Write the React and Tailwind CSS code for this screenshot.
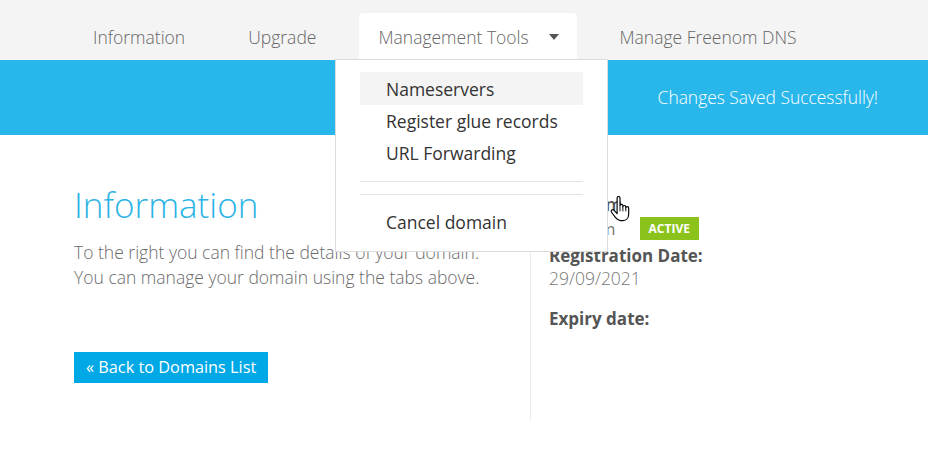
import React from "react";

const font = { fontFamily: '"Open Sans", "Noto Sans", sans-serif' };

function Caret() {
  return (
    <svg width="10" height="6" viewBox="0 0 10 6" className="ml-[20px] shrink-0">
      <path d="M0 0 L10 0 L5 6 Z" fill="#555" />
    </svg>
  );
}

function HandCursor() {
  return (
    <svg width="22" height="26" viewBox="0 0 19 22" className="absolute left-[609px] top-[196px]">
      <path
        d="M7 1.5 C7 0.7 7.6 0.2 8.3 0.2 C9 0.2 9.5 0.7 9.5 1.5 L9.5 8 C9.6 7.3 10.1 7 10.8 7 C11.5 7 12 7.5 12 8.2 L12 9 C12.1 8.4 12.6 8 13.3 8 C14 8 14.5 8.5 14.5 9.2 L14.5 10 C14.6 9.4 15.1 9 15.8 9 C16.5 9 17 9.5 17 10.2 L17 15 C17 18.5 15 21 12 21 L10 21 C8 21 6.8 20 5.5 18.3 L2.2 13.8 C1.7 13.1 1.9 12.3 2.5 11.9 C3.1 11.5 3.9 11.6 4.4 12.2 L7 15 Z"
        fill="#fff"
        stroke="#000"
        strokeWidth="1"
        strokeLinejoin="round"
      />
      <path d="M9.5 8 L9.5 13 M12 9 L12 13 M14.5 10 L14.5 13" stroke="#000" strokeWidth="0.8" />
    </svg>
  );
}

export default function App() {
  return (
    <div className="relative w-[928px] h-[476px] bg-white overflow-hidden" style={font}>
      {/* Nav */}
      <div className="h-[60px] bg-[#f4f4f4] pl-[73px] flex items-end">
        <div className="flex items-end h-[47px] text-[17.5px] font-light text-[#666] whitespace-nowrap">
          <div className="px-[20px] h-full flex items-center pt-[1px]">Information</div>
          <div className="ml-[23px] px-[20px] h-full flex items-center pt-[1px]">Upgrade</div>
          <div className="ml-[23px] pl-[19px] pr-[20px] h-full flex items-center pt-[1px] bg-white rounded-t-[4px] w-[218px]">
            <span>Management Tools</span>
            <Caret />
          </div>
          <div className="ml-[22px] px-[20px] h-full flex items-center pt-[1px]">Manage Freenom DNS</div>
        </div>
      </div>

      {/* Blue bar */}
      <div className="h-[75px] bg-[#29b7eb] flex items-center justify-end pr-[50px]">
        <span className="text-white text-[17.4px] font-light">Changes Saved Successfully!</span>
      </div>

      {/* Content */}
      <div className="flex mx-[74px] mt-[36px]">
        <div className="w-[456px] pt-[12px]">
          <h1 className="text-[35px] font-light text-[#2bb3e6] leading-[44px]">Information</h1>
          <p className="mt-[13px] text-[17.5px] font-light text-[#6a6a6a] leading-[25px]">
            To the right you can find the details of your domain.
            <br />
            You can manage your domain using the tabs above.
          </p>
          <button className="mt-[62px] h-[31px] px-[12px] bg-[#00a8e6] text-white text-[16.3px] flex items-center">
            « Back to Domains List
          </button>
        </div>
        <div className="border-l border-[#ececec] pl-[18px] h-[250px] pt-[21px]">
          <div className="text-[18px] font-semibold text-[#555] leading-[24px]">site.com</div>
          <div className="flex items-center">
            <span className="text-[17px] text-[#777]">site.com</span>
            <span className="ml-[24px] h-[23px] px-[9px] bg-[#8cc21c] text-white text-[12px] font-bold flex items-center">ACTIVE</span>
          </div>
          <div className="text-[17px] font-bold text-[#555] leading-[22px] mt-[3px]">Registration Date:</div>
          <div className="text-[17.5px] font-light text-[#777] leading-[22px]">29/09/2021</div>
          <div className="text-[17px] font-bold text-[#555] leading-[22px] mt-[19px]">Expiry date:</div>
        </div>
      </div>

      {/* Dropdown */}
      <div className="absolute left-[335px] top-[59px] w-[273px] h-[193px] bg-white border border-[#dcdcdc] px-[24px] pt-[13px] text-[17.5px] text-[#333]">
        <div className="h-[32.5px] bg-[#f4f4f4] flex items-center pl-[26px] -mt-[1px] pt-[1px]">Nameservers</div>
        <div className="h-[32.5px] flex items-center pl-[26px]">Register glue records</div>
        <div className="h-[32.5px] flex items-center pl-[26px]">URL Forwarding</div>
        <div className="mt-[11px] border-t border-[#e2e2e2]" />
        <div className="mt-[12px] border-t border-[#e2e2e2]" />
        <div className="h-[32px] mt-[12px] flex items-center pl-[26px]">Cancel domain</div>
      </div>

      <HandCursor />
    </div>
  );
}
